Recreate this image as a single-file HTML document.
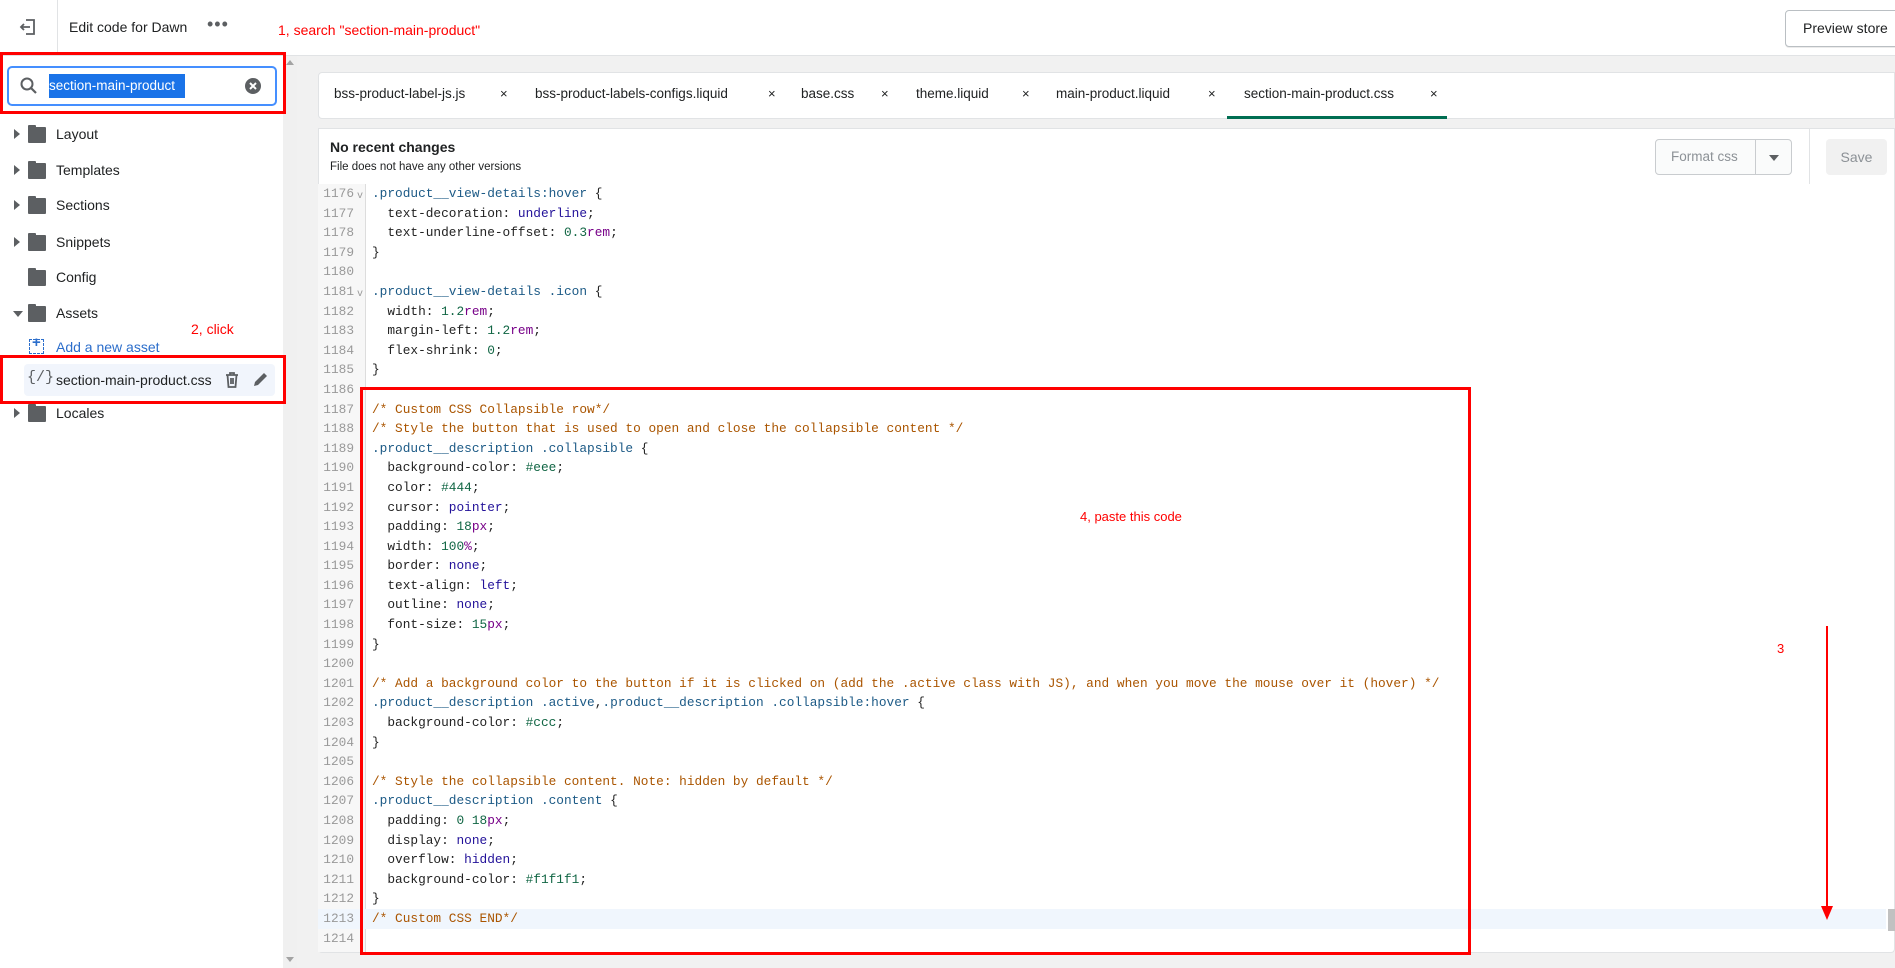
<!DOCTYPE html>
<html><head><meta charset="utf-8">
<style>
*{margin:0;padding:0;box-sizing:border-box}
html,body{width:1895px;height:968px;overflow:hidden;background:#f1f1f1;font-family:"Liberation Sans",sans-serif;color:#202223;position:relative}
.a{position:absolute}
.top{left:0;top:0;width:1895px;height:56px;background:#fff;border-bottom:1px solid #e1e3e5}
.side{left:0;top:56px;width:283px;height:912px;background:#fff}
.sb{left:283px;top:56px;width:14px;height:912px;background:#f0f0f0}
.item{left:0;height:20px;font-size:14px;line-height:20px;white-space:nowrap}
.arr{left:14px;width:0;height:0;border-top:5px solid transparent;border-bottom:5px solid transparent;border-left:6px solid #5c5f62}
.fold{left:28px;width:18px;height:16px;background:#5c5f62;border-radius:1px}
.fold:before{content:"";position:absolute;left:0;top:-2px;width:8px;height:3px;background:#5c5f62;border-radius:1px 1px 0 0}
.red{border:3px solid #f00}
.ann{color:#f00;font-size:14px}
.code{font-family:"Liberation Mono",monospace;font-size:12.8px;white-space:pre;line-height:19.6px}
.ln{color:#999;text-align:right;width:36px;left:318px}
.c{color:#a50}.s{color:#1c5a86}.n{color:#164}.u{color:#708}.k{color:#219}.p{color:#222}
</style></head><body>
<div class="a top"></div>
<div class="a" style="left:57px;top:0;width:1px;height:56px;background:#e1e3e5"></div>
<svg class="a" style="left:18px;top:17px" width="20" height="20" viewBox="0 0 20 20"><path d="M8 3H16V17H8M3 10H12M6 7L3 10L6 13" fill="none" stroke="#5c5f62" stroke-width="1.8"/></svg>
<div class="a" style="left:69px;top:19px;font-size:14px">Edit code for Dawn</div>
<div class="a" style="left:207px;top:14px;font-size:18px;letter-spacing:1px;color:#5c5f62">•••</div>
<div class="a ann" style="left:278px;top:22px">1, search "section-main-product"</div>
<div class="a" style="left:1785px;top:10px;width:120px;height:37px;border:1px solid #babfc3;border-radius:4px;background:#fff;font-size:14px;line-height:35px;padding-left:17px;box-shadow:0 1px 0 rgba(0,0,0,.08)">Preview store</div>

<div class="a side"></div>
<div class="a sb"></div>
<div class="a" style="left:286px;top:60px;border-left:4px solid transparent;border-right:4px solid transparent;border-bottom:5px solid #a3a3a3"></div>
<div class="a" style="left:286px;top:957px;border-left:4px solid transparent;border-right:4px solid transparent;border-top:5px solid #a3a3a3"></div>

<div class="a" style="left:7px;top:66px;width:270px;height:40px;border:2px solid #458fff;border-radius:5px;background:#fff"></div>
<svg class="a" style="left:19px;top:76px" width="20" height="20" viewBox="0 0 20 20"><circle cx="8" cy="8" r="5.5" fill="none" stroke="#5c5f62" stroke-width="2"/><path d="M12 12L17 17" stroke="#5c5f62" stroke-width="2.2"/></svg>
<div class="a" style="left:49px;top:74px;width:136px;height:24px;background:#1a73e8;color:#fff;font-size:13.5px;line-height:24px;white-space:nowrap;overflow:hidden">section-main-product</div>
<svg class="a" style="left:244px;top:77px" width="18" height="18" viewBox="0 0 18 18"><circle cx="9" cy="9" r="8" fill="#5c5f62"/><path d="M6 6L12 12M12 6L6 12" stroke="#fff" stroke-width="2"/></svg>
<div class="a red" style="left:0;top:52px;width:286px;height:62px"></div>

<div class="a arr" style="top:129px"></div><div class="a fold" style="top:127px"></div><div class="a item" style="left:56px;top:124px">Layout</div>
<div class="a arr" style="top:165px"></div><div class="a fold" style="top:163px"></div><div class="a item" style="left:56px;top:160px">Templates</div>
<div class="a arr" style="top:200px"></div><div class="a fold" style="top:198px"></div><div class="a item" style="left:56px;top:195px">Sections</div>
<div class="a arr" style="top:237px"></div><div class="a fold" style="top:235px"></div><div class="a item" style="left:56px;top:232px">Snippets</div>
<div class="a fold" style="top:270px"></div><div class="a item" style="left:56px;top:267px">Config</div>
<div class="a" style="left:13px;top:311px;border-left:5px solid transparent;border-right:5px solid transparent;border-top:6px solid #5c5f62"></div><div class="a fold" style="top:306px"></div><div class="a item" style="left:56px;top:303px">Assets</div>
<div class="a" style="left:29px;top:339px;width:15px;height:15px;border:1.5px dashed #2c6ecb"></div><div class="a" style="left:32px;top:334px;color:#2c6ecb;font-size:15px;font-weight:bold">+</div>
<div class="a item" style="left:56px;top:337px;color:#2c6ecb">Add a new asset</div>
<div class="a ann" style="left:191px;top:321px">2, click</div>
<div class="a" style="left:24px;top:364px;width:251px;height:32px;background:#f1f5fc;border-radius:4px"></div>
<div class="a" style="left:27px;top:369px;font-size:15px;color:#5c5f62;font-family:'Liberation Mono',monospace">{/}</div>
<div class="a item" style="left:56px;top:370px">section-main-product.css</div>
<svg class="a" style="left:224px;top:371px" width="16" height="18" viewBox="0 0 16 18"><path d="M2 4H14M6 4V2H10V4M3.5 4L4.5 16H11.5L12.5 4M7 7V13M9 7V13" fill="none" stroke="#5c5f62" stroke-width="1.8"/></svg>
<svg class="a" style="left:252px;top:370px" width="18" height="18" viewBox="0 0 18 18"><path d="M2 16L3 12L12 3L15 6L6 15Z" fill="#5c5f62"/></svg>
<div class="a red" style="left:0;top:355px;width:286px;height:49px"></div>
<div class="a arr" style="top:408px"></div><div class="a fold" style="top:406px"></div><div class="a item" style="left:56px;top:403px">Locales</div>

<div class="a" style="left:318px;top:72px;width:1577px;height:47px;background:#fff;border:1px solid #e1e3e5;border-radius:4px 0 0 4px"></div>
<div class="a" style="top:86px;font-size:13.5px;left:334px">bss-product-label-js.js</div><div class="a" style="top:86px;font-size:13px;left:500px">×</div>
<div class="a" style="top:86px;font-size:13.5px;left:535px">bss-product-labels-configs.liquid</div><div class="a" style="top:86px;font-size:13px;left:768px">×</div>
<div class="a" style="top:86px;font-size:13.5px;left:801px">base.css</div><div class="a" style="top:86px;font-size:13px;left:881px">×</div>
<div class="a" style="top:86px;font-size:13.5px;left:916px">theme.liquid</div><div class="a" style="top:86px;font-size:13px;left:1022px">×</div>
<div class="a" style="top:86px;font-size:13.5px;left:1056px">main-product.liquid</div><div class="a" style="top:86px;font-size:13px;left:1208px">×</div>
<div class="a" style="top:86px;font-size:13.5px;left:1244px">section-main-product.css</div><div class="a" style="top:86px;font-size:13px;left:1430px">×</div>
<div class="a" style="left:1227px;top:116px;width:220px;height:3px;background:#006e52"></div>

<div class="a" style="left:318px;top:128px;width:1577px;height:57px;background:#fff;border:1px solid #e1e3e5;border-bottom:1px solid #d2d5d8"></div>
<div class="a" style="left:330px;top:139px;font-size:14px;font-weight:bold;color:#202223">No recent changes</div>
<div class="a" style="left:330px;top:161px;font-size:11.5px">File does not have any other versions</div>
<div class="a" style="left:1655px;top:139px;width:137px;height:36px;border:1px solid #c9cccf;border-radius:4px;background:#fafbfb"></div>
<div class="a" style="left:1755px;top:139px;width:1px;height:36px;background:#c9cccf"></div>
<div class="a" style="left:1671px;top:149px;font-size:13.5px;color:#8c9196">Format css</div>
<div class="a" style="left:1769px;top:155px;border-left:5px solid transparent;border-right:5px solid transparent;border-top:6px solid #5c5f62"></div>
<div class="a" style="left:1809px;top:128px;width:1px;height:57px;background:#e1e3e5"></div>
<div class="a" style="left:1826px;top:139px;width:61px;height:36px;background:#f1f1f1;border-radius:4px;color:#8c9196;font-size:14px;line-height:36px;text-align:center">Save</div>

<div class="a" style="left:318px;top:184px;width:1577px;height:769px;background:#fff;border:1px solid #e1e3e5;border-top:none;border-radius:0 0 4px 4px"></div>
<div class="a" style="left:318px;top:184px;width:48px;height:768px;background:#f7f7f7;border-right:1px solid #ddd"></div>
<div class="a" style="left:318px;top:909px;width:1568px;height:20px;background:#f0f6fd"></div>
<div class="a" style="left:1888px;top:909px;width:7px;height:22px;background:#c1c1c1"></div>

<div class="a code ln" style="top:184px">1176
1177
1178
1179
1180
1181
1182
1183
1184
1185
1186
1187
1188
1189
1190
1191
1192
1193
1194
1195
1196
1197
1198
1199
1200
1201
1202
1203
1204
1205
1206
1207
1208
1209
1210
1211
1212
1213
1214</div>
<div class="a code" style="left:357px;top:187px;color:#999;font-size:10px">v</div>
<div class="a code" style="left:357px;top:285px;color:#999;font-size:10px">v</div>
<div class="a code p" style="left:372px;top:184px"><span class="s">.product__view-details:hover</span> {
  text-decoration: <span class="k">underline</span>;
  text-underline-offset: <span class="n">0.3</span><span class="u">rem</span>;
}

<span class="s">.product__view-details .icon</span> {
  width: <span class="n">1.2</span><span class="u">rem</span>;
  margin-left: <span class="n">1.2</span><span class="u">rem</span>;
  flex-shrink: <span class="n">0</span>;
}

<span class="c">/* Custom CSS Collapsible row*/</span>
<span class="c">/* Style the button that is used to open and close the collapsible content */</span>
<span class="s">.product__description .collapsible</span> {
  background-color: <span class="n">#eee</span>;
  color: <span class="n">#444</span>;
  cursor: <span class="k">pointer</span>;
  padding: <span class="n">18</span><span class="u">px</span>;
  width: <span class="n">100</span><span class="u">%</span>;
  border: <span class="k">none</span>;
  text-align: <span class="k">left</span>;
  outline: <span class="k">none</span>;
  font-size: <span class="n">15</span><span class="u">px</span>;
}

<span class="c">/* Add a background color to the button if it is clicked on (add the .active class with JS), and when you move the mouse over it (hover) */</span>
<span class="s">.product__description .active</span>,<span class="s">.product__description .collapsible:hover</span> {
  background-color: <span class="n">#ccc</span>;
}

<span class="c">/* Style the collapsible content. Note: hidden by default */</span>
<span class="s">.product__description .content</span> {
  padding: <span class="n">0</span> <span class="n">18</span><span class="u">px</span>;
  display: <span class="k">none</span>;
  overflow: <span class="k">hidden</span>;
  background-color: <span class="n">#f1f1f1</span>;
}
<span class="c">/* Custom CSS END*/</span>
</div>

<div class="a red" style="left:360px;top:387px;width:1111px;height:568px"></div>
<div class="a ann" style="left:1080px;top:509px;font-size:13px">4, paste this code</div>
<div class="a ann" style="left:1777px;top:641px;font-size:13px">3</div>
<div class="a" style="left:1826px;top:626px;width:2px;height:284px;background:#f00"></div>
<div class="a" style="left:1821px;top:906px;border-left:6px solid transparent;border-right:6px solid transparent;border-top:14px solid #f00"></div>
</body></html>
